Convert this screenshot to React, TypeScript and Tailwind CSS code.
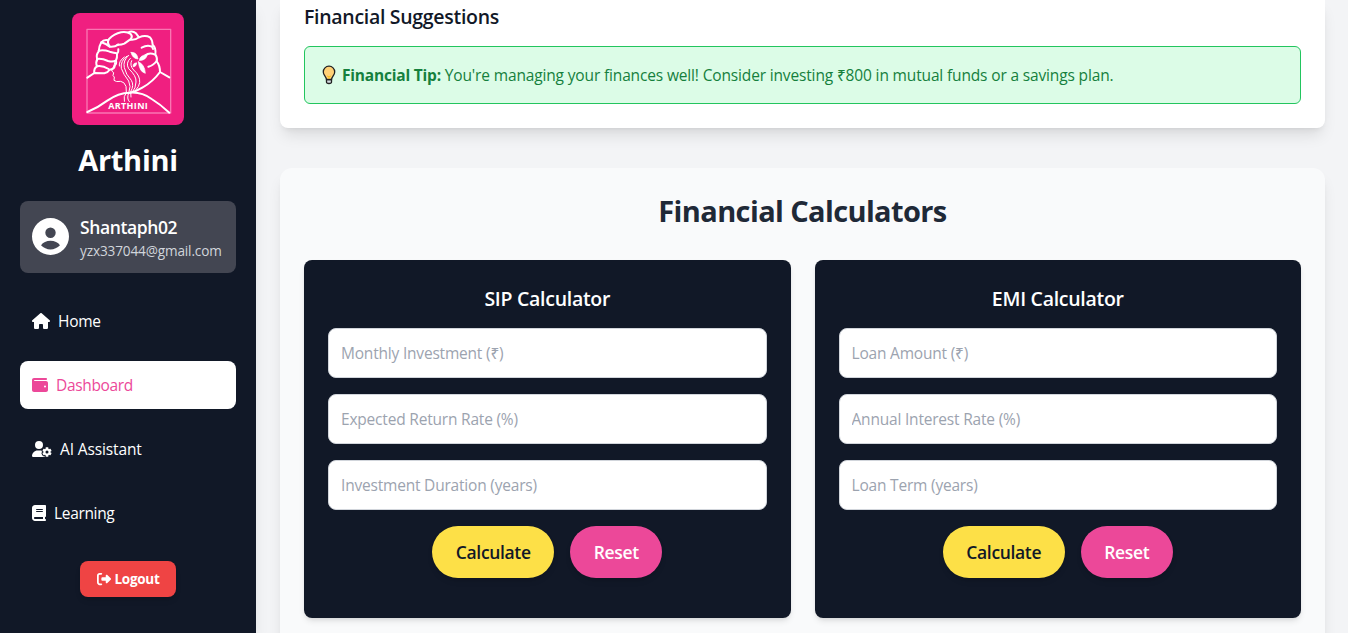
import type { ReactNode } from "react";
import { FaHouse, FaWallet, FaUserGear, FaBook, FaRightFromBracket } from "react-icons/fa6";

function Logo() {
  return (
    <svg viewBox="24 24 336 336" className="h-28 w-28 rounded-lg bg-[#f01f80]" fill="none" stroke="#fff" strokeWidth="6" strokeLinecap="round" strokeLinejoin="round">
      <rect x="69" y="73" width="251" height="251" stroke="#f976b2" strokeWidth="4" />
      <path d="M70 218 L91 204 L121 205 Q132 202 137 194 Q151 193 153 180 Q158 177 156 166 Q160 158 159 147 Q164 142 163 133" />
      <path d="M91 204 Q89 190 99 184 Q94 172 100 163 Q95 150 104 139 Q105 124 112 112 Q119 103 133 106" />
      <path d="M112 112 Q126 116 137 125 Q151 127 163 119 M104 137 Q120 134 137 140 Q151 144 158 145 M99 162 Q114 160 132 168 Q147 172 155 167 M99 184 Q115 181 134 192" />
      <path d="M137 124 Q128 112 135 102 Q151 86 171 82 Q190 79 201 88 Q207 96 199 103 L181 116 Q168 121 160 119" />
      <path d="M193 83 Q204 75 216 85 L225 97 M199 104 Q214 106 225 97 Q244 89 258 97 Q265 104 266 119 Q277 129 274 148 Q281 160 278 169 Q288 181 288 201 L316 217" />
      <path d="M233 128 Q246 121 257 123 Q266 123 267 132 M244 151 Q256 141 273 149 M253 185 Q267 182 278 168 M288 201 Q267 230 235 248 Q218 259 197 263" />
      <path d="M153 168 Q151 180 148 187 L143 198 L149 203 L147 212 L151 216 L150 226 Q156 232 170 229 Q181 230 186 244 L187 262" strokeWidth="3" />
      <path d="M194 151 Q176 167 181 188 Q185 208 202 226 Q211 241 200 260 L201 276 M199 160 Q184 174 194 191 Q218 213 216 231 Q216 250 204 263 M189 153 Q168 169 172 190 Q178 208 194 228 Q202 244 195 261 M203 167 Q196 181 209 195 Q229 212 227 233 Q225 245 216 254 M187 263 Q177 274 181 289 M194 264 Q187 281 196 290 M181 156 Q163 169 166 183" strokeWidth="3" />
      <path d="M201 142 Q219 140 222 162 Q205 161 201 142 M226 166 Q227 150 250 149 Q245 168 226 166 M223 170 Q243 179 244 205 Q226 201 223 170 M218 174 Q207 172 207 185 Q217 186 218 174" fill="#fff" strokeWidth="2" />
      <path d="M70 321 Q102 308 130 287 Q163 263 197 263 Q233 260 263 282 Q289 298 316 323" />
      <text x="192" y="311" textAnchor="middle" textLength="119" fill="#fff" stroke="none" className="font-['Open_Sans',sans-serif] text-[27px] font-bold">ARTHINI</text>
    </svg>
  );
}

function Avatar() {
  return (
    <svg viewBox="0 0 37 37" className="-mt-0.5 -mr-px h-[37px] w-[37px] shrink-0">
      <path fill="#fff" fillRule="evenodd" d="M18.500 0a18.500 18.500 0 1 0 0 37a18.500 18.500 0 0 0 0-37ZM18.500 9.500a5.200 5.200 0 1 1 0 10.400a5.200 5.200 0 0 1 0-10.400ZM9 27.300C11 24.500 14.500 22.800 18.500 22.800s7.500 1.700 9.500 4.500C25.500 30 22 31.500 18.500 31.500S11.500 30 9 27.300Z" />
    </svg>
  );
}

function Bulb() {
  return (
    <svg viewBox="0 0 14 20" className="mr-[6px] inline-block h-5 w-[14px] align-[-4px]">
      <path d="M4.500 14.500v2.500q0 1.500 2.500 1.500t2.500-1.500v-2.500z" fill="#d5dbe0" stroke="#222" strokeWidth="1.300" />
      <path d="M7 1.200a5.600 5.600 0 0 0-5.700 5.700c0 3.200 2.700 4.300 3.200 7.600h5c.5-3.300 3.200-4.400 3.200-7.600A5.600 5.600 0 0 0 7 1.200Z" fill="#ffd076" stroke="#222" strokeWidth="1.300" />
      <path d="M5 11l2 .8 2-.8M7 11.500v2.500" fill="none" stroke="#f8bd1c" />
    </svg>
  );
}

function NavItem({ icon, label, className }: { icon: ReactNode; label: string; className: string }) {
  return (
    <a className={`flex h-12 items-center gap-2 rounded-lg px-3 text-[15.5px] ${className}`}>
      {icon}
      <span className="leading-6">{label}</span>
    </a>
  );
}

function Calculator({ title, fields }: { title: string; fields: string[] }) {
  return (
    <div className="h-[358px] rounded-lg bg-[#111827] p-6 shadow-md">
      <h3 className="mb-[15px] pt-px text-center text-[19.5px] leading-7 font-semibold tracking-[-0.29px] text-white">{title}</h3>
      <div className="flex flex-col gap-4">
        {fields.map((f) => (
          <input key={f} placeholder={f} className="h-[50px] w-full rounded-lg border border-[#d1d5db] bg-white px-3 text-[15.5px] tracking-[-0.2px] placeholder:text-[#9ca3af]" />
        ))}
      </div>
      <div className="mt-4 flex justify-center gap-4 text-[17.5px] leading-7 font-semibold tracking-[-0.35px]">
        <button className="h-[52px] w-[122px] rounded-full bg-[#fde047] text-[#111827] shadow-md">Calculate</button>
        <button className="h-[52px] w-[92px] rounded-full bg-[#ec4899] text-white shadow-md">Reset</button>
      </div>
    </div>
  );
}

export default function App() {
  return (
    <div className="flex h-[633px] overflow-hidden bg-[#f3f4f6] font-['Open_Sans','Noto_Sans',sans-serif] text-base">
      <aside className="flex w-64 shrink-0 flex-col bg-[#111827] px-5 pt-[13px] text-white shadow-lg">
        <div className="flex flex-col items-center">
          <Logo />
          <h1 className="mt-[17px] text-[29px] leading-9 font-bold tracking-[-0.3px]">Arthini</h1>
        </div>
        <div className="mt-[23px] flex h-[72px] items-center gap-3 rounded-lg bg-[#434652] px-3">
          <Avatar />
          <div>
            <p className="text-[17.5px] leading-7 font-semibold tracking-[-0.4px]">Shantaph02</p>
            <p className="text-[13.6px] leading-5 tracking-[-0.14px] text-[#d1d5db]">yzx337044@gmail.com</p>
          </div>
        </div>
        <nav className="mt-6 flex flex-col gap-4">
          <NavItem icon={<FaHouse className="h-4 w-[18px]" />} label="Home" className="tracking-[-0.25px]" />
          <NavItem icon={<FaWallet className="h-4 w-4" />} label="Dashboard" className="bg-white tracking-[-0.34px] text-[#ec4899]" />
          <NavItem icon={<FaUserGear className="h-4 w-5" />} label="AI Assistant" className="tracking-[-0.12px]" />
          <NavItem icon={<FaBook className="h-4 w-[14px]" />} label="Learning" className="tracking-[-0.33px]" />
        </nav>
        <button className="mt-6 flex h-9 w-24 items-center justify-center gap-1 self-center rounded-lg bg-[#ef4444] text-[13.5px] font-bold tracking-[-0.3px] shadow-md">
          <FaRightFromBracket className="h-[14px] w-[14px]" />
          Logout
        </button>
      </aside>
      <main className="flex min-w-0 flex-1 flex-col pr-[23px] pl-6">
        <section className="h-32 shrink-0 rounded-b-lg bg-white px-6 pt-[3px] shadow-lg">
          <h2 className="mb-[15px] text-[19.5px] leading-7 font-semibold tracking-[-0.3px] text-[#111827]">Financial Suggestions</h2>
          <div className="h-[58px] rounded-md border border-[#22c55e] bg-[#dcfce7] px-[17px] py-4 text-[15.5px] leading-6 tracking-[-0.15px] whitespace-nowrap text-[#15803d]">
            <Bulb />
            <strong className="font-bold tracking-[-0.2px]">Financial Tip:</strong>{" "}
            <span>You're managing your finances well! Consider investing ₹800 in mutual funds or a savings plan.</span>
          </div>
        </section>
        <section className="mt-10 h-[520px] shrink-0 rounded-xl bg-[#f9fafb] p-6 shadow-lg">
          <h2 className="mb-[31px] pt-px text-center text-[29px] leading-9 font-bold tracking-[-0.62px] text-[#1f2937]">Financial Calculators</h2>
          <div className="grid grid-cols-2 gap-6">
            <Calculator title="SIP Calculator" fields={["Monthly Investment (₹)", "Expected Return Rate (%)", "Investment Duration (years)"]} />
            <Calculator title="EMI Calculator" fields={["Loan Amount (₹)", "Annual Interest Rate (%)", "Loan Term (years)"]} />
          </div>
        </section>
      </main>
    </div>
  );
}
